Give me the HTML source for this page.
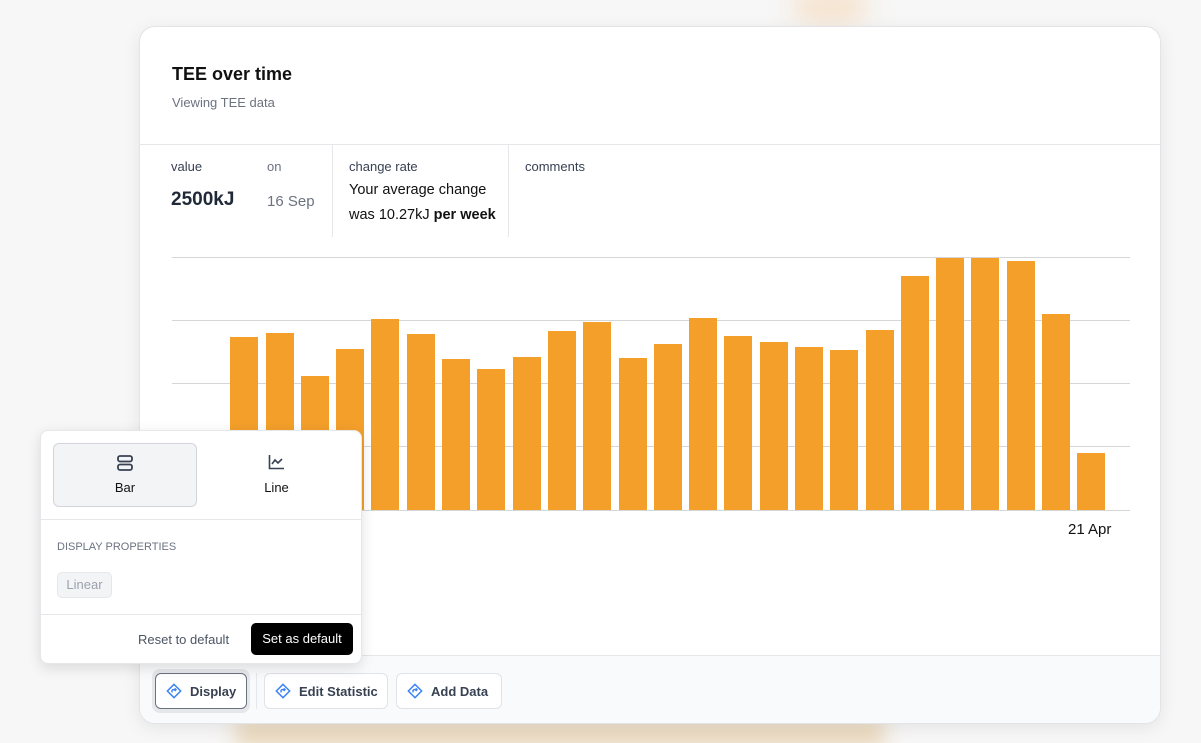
<!DOCTYPE html>
<html><head><meta charset="utf-8"><style>
*{box-sizing:border-box;margin:0;padding:0}
html,body{width:1201px;height:743px;overflow:hidden}
body{background:#f7f7f7;font-family:"Liberation Sans",sans-serif;position:relative;color:#111}
.glow1{position:absolute;left:790px;top:-10px;width:80px;height:34px;background:#f5e2cc;filter:blur(12px);border-radius:50%}
.glow2{position:absolute;left:235px;top:718px;width:650px;height:30px;background:#ead8bc;filter:blur(10px)}
.card{position:absolute;left:139px;top:26px;width:1022px;height:698px;background:#fff;border:1px solid #e3e4e8;border-radius:16px;box-shadow:0 4px 18px rgba(0,0,0,.08);overflow:hidden}
.t{position:absolute;left:32px;top:37px;font-size:18px;font-weight:bold}
.st{position:absolute;left:32px;top:68px;font-size:13px;color:#6b7280}
.hr{position:absolute;left:0;right:0;top:117px;border-top:1px solid #e5e7eb}
.lbl{position:absolute;font-size:13px;color:#374151}
.vr{position:absolute;top:118px;height:92px;border-left:1px solid #e5e7eb}
.grid{position:absolute;left:32px;width:958px;border-top:1px solid #d6d6d6}
.bar{position:absolute;width:28px;background:#f39f2a}
.foot{position:absolute;left:0;right:0;top:628px;bottom:0;background:#f8fafc;border-top:1px solid #e5e7eb}
.btn{position:absolute;top:17px;height:36px;border:1px solid #e0e3e8;border-radius:6px;background:#fff;font-size:13px;font-weight:bold;color:#374151;display:flex;align-items:center;padding-left:10px;gap:8px}
.pop{position:absolute;left:40px;top:430px;width:322px;height:234px;background:#fff;border:1px solid #e5e7eb;border-radius:8px;box-shadow:0 4px 14px rgba(0,0,0,.12)}
</style></head><body>
<div class="glow1"></div><div class="glow2"></div>
<div class="card">
<div class="t">TEE over time</div>
<div class="st">Viewing TEE data</div>
<div class="hr"></div>
<div class="lbl" style="left:31px;top:132px">value</div>
<div class="lbl" style="left:127px;top:132px;color:#6b7280">on</div>
<div style="position:absolute;left:31px;top:162px;font-size:19px;font-weight:bold;color:#1f2937">2500kJ</div>
<div style="position:absolute;left:127px;top:166px;font-size:15px;color:#6b7280">16 Sep</div>
<div class="vr" style="left:192px"></div>
<div class="lbl" style="left:209px;top:132px">change rate</div>
<div style="position:absolute;left:209px;top:151px;font-size:14.5px;line-height:25px">Your average change<br>was 10.27kJ <b>per week</b></div>
<div class="vr" style="left:368px"></div>
<div class="lbl" style="left:385px;top:132px">comments</div>
<div class="grid" style="top:230px"></div><div class="grid" style="top:293px"></div><div class="grid" style="top:356px"></div><div class="grid" style="top:419px"></div><div class="grid" style="top:483px"></div>
<div id="bars"></div>
<div style="position:absolute;left:928px;top:494px;font-size:15px">21 Apr</div>
<div class="foot">
<div style="position:absolute;left:12px;top:13px;width:98px;height:44px;background:#e5e7eb;border-radius:8px"></div>
<div class="btn" style="left:15px;width:92px;border-color:#6b7280"><svg width="16" height="16" viewBox="0 0 24 24" fill="none" stroke="#3b82f6" stroke-width="2.2"><path d="M12 2L22 12 12 22 2 12z"/><path d="M9 14v-2a2 2 0 0 1 2-2h4M13 8l2 2-2 2"/></svg>Display</div>
<div style="position:absolute;left:116px;top:17px;height:36px;border-left:1px solid #e5e7eb"></div>
<div class="btn" style="left:124px;width:124px"><svg width="16" height="16" viewBox="0 0 24 24" fill="none" stroke="#3b82f6" stroke-width="2.2"><path d="M12 2L22 12 12 22 2 12z"/><path d="M9 14v-2a2 2 0 0 1 2-2h4M13 8l2 2-2 2"/></svg>Edit Statistic</div>
<div class="btn" style="left:256px;width:106px"><svg width="16" height="16" viewBox="0 0 24 24" fill="none" stroke="#3b82f6" stroke-width="2.2"><path d="M12 2L22 12 12 22 2 12z"/><path d="M9 14v-2a2 2 0 0 1 2-2h4M13 8l2 2-2 2"/></svg>Add Data</div>
</div>
</div>
<div class="pop">
<div style="position:absolute;left:12px;top:12px;width:144px;height:64px;background:#f3f4f6;border:1px solid #d1d5db;border-radius:6px"></div>
<svg style="position:absolute;left:75px;top:23px" width="18" height="18" viewBox="0 0 18 18" fill="none" stroke="#374151" stroke-width="1.8"><rect x="2" y="2" width="14" height="5.5" rx="2"/><rect x="2" y="10.5" width="14" height="5.5" rx="2"/></svg>
<div style="position:absolute;left:12px;width:144px;top:49px;text-align:center;font-size:13px">Bar</div>
<svg style="position:absolute;left:227px;top:23px" width="17" height="16" viewBox="0 0 17 16" fill="none" stroke="#374151" stroke-width="1.6"><path d="M1.5 1v13.5H16"/><path d="M4 10l3-4 3 3 4-4"/></svg>
<div style="position:absolute;left:169px;width:133px;top:49px;text-align:center;font-size:13px">Line</div>
<div style="position:absolute;left:0;right:0;top:88px;border-top:1px solid #e5e7eb"></div>
<div style="position:absolute;left:16px;top:110px;font-size:11px;color:#6b7280">DISPLAY PROPERTIES</div>
<div style="position:absolute;left:16px;top:141px;width:55px;height:26px;background:#f3f4f6;border:1px solid #e5e7eb;border-radius:5px;font-size:13px;color:#9ca3af;text-align:center;line-height:24px">Linear</div>
<div style="position:absolute;left:0;right:0;top:183px;border-top:1px solid #e5e7eb"></div>
<div style="position:absolute;left:97px;top:201px;font-size:13px;color:#4b5563">Reset to default</div>
<div style="position:absolute;left:210px;top:192px;width:102px;height:32px;background:#000;border-radius:5px;color:#fff;font-size:13px;text-align:center;line-height:32px">Set as default</div>
</div>
<script>
var tops=[440,336,332,375,348,318,333,358,368,356,330,321,357,343,317,335,341,346,349,329,275,257,257,260,313,452];
var h='';for(var i=0;i<tops.length;i++){var x=194+i*35.29-139,t=tops[i]-26;h+='<div class="bar" style="left:'+x.toFixed(1)+'px;top:'+t+'px;height:'+(483-t)+'px"></div>';}
document.getElementById('bars').innerHTML=h;
</script>
</body></html>
